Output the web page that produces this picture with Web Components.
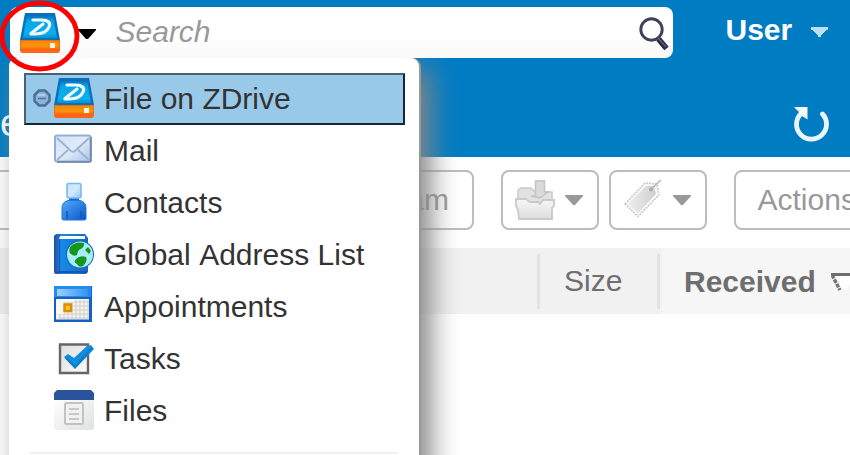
<!DOCTYPE html>
<html lang="en">
<head>
<meta charset="utf-8">
<title>Mail</title>
<style>
html,body{margin:0;padding:0}
body{width:850px;height:455px;overflow:hidden;background:#fff;font:30px/34px "Liberation Sans",Arial,sans-serif;color:#333}
</style>
</head>
<body>
<mail-app></mail-app>
<script>
const define=(name,html)=>{
  const t=document.createElement('template');t.innerHTML=html;
  customElements.define(name,class extends HTMLElement{
    constructor(){super();this.attachShadow({mode:'open'}).append(t.content.cloneNode(true));}
  });
};

const icons={
drive:`<svg width="40" height="40" viewBox="0 0 40 40"><defs><linearGradient id="a" x2="0" y2="1"><stop stop-color="#0869b5"/><stop offset=".25" stop-color="#08a4e6"/><stop offset=".8" stop-color="#0cb0ee"/><stop offset="1" stop-color="#0890d5"/></linearGradient><linearGradient id="b" x2="0" y2="1"><stop stop-color="#e98d00"/><stop offset=".6" stop-color="#fb9210"/><stop offset="1" stop-color="#ff5a12"/></linearGradient></defs><path d="M5 0H35L40 27H0Z" fill="#0870bd"/><path d="M7 2H33L37 25H3Z" fill="url(#a)"/><path d="M0 27H40V37Q40 40 37 40H3Q0 40 0 37Z" fill="#ff6418"/><path d="M1 28H39V37H1Z" fill="url(#b)"/><path d="M13 7H22C28 7 31 10 29 14C27 19 21 21 15 21H11M23 11L11 20.500" fill="none" stroke="#effaff" stroke-width="3.200" stroke-linecap="round" stroke-linejoin="round"/><path d="M30 30h5v5h-5z" fill="#fff8df"/></svg>`,
mail:`<svg width="40" height="40" viewBox="0 0 40 40"><defs><linearGradient id="a" x2="1" y2="1"><stop stop-color="#d0e2f7"/><stop offset=".5" stop-color="#e0ebf9"/><stop offset="1" stop-color="#a9c4e7"/></linearGradient></defs><rect x="1" y="5.500" width="35.500" height="26" rx="2" fill="url(#a)" stroke="#93afd6" stroke-width="2"/><path d="M37 7V31Q37 32 35 32H3" fill="none" stroke="#6781a4" stroke-width="1.500"/><path d="M3 8L17 21Q19 22.500 21 21L35 8M3 30L14 20M35 30L24 20" fill="none" stroke="#98b3d8" stroke-width="1.800"/></svg>`,
person:`<svg width="40" height="40" viewBox="0 0 40 40"><defs><linearGradient id="a" x2="1" y2="1"><stop stop-color="#55aafa"/><stop offset="1" stop-color="#0755c9"/></linearGradient><linearGradient id="b" x2="1" y2="1"><stop stop-color="#c3e3fb"/><stop offset=".5" stop-color="#d4e9f8"/><stop offset="1" stop-color="#8fc3ee"/></linearGradient></defs><path d="M15 16H25V22H15z" fill="#1769ce"/><path d="M8 26Q8 20 14 18.500H26Q32 20 32 26V37Q32 38 30 38H10Q8 38 8 37Z" fill="url(#a)" stroke="#2775d8"/><path d="M13 29V37M27 29V37" stroke="#0f5cc0" stroke-width="1.600"/><rect x="13" y="1.500" width="14" height="14.500" rx="2" fill="url(#b)" stroke="#7bb8ef" stroke-width="1.600"/></svg>`,
book:`<svg width="40" height="40" viewBox="0 0 40 40"><defs><linearGradient id="a" x2="1"><stop stop-color="#174fa7"/><stop offset=".13" stop-color="#2a6fc4"/><stop offset=".15" stop-color="#0d55ad"/><stop offset=".2" stop-color="#178bea"/><stop offset="1" stop-color="#1268c9"/></linearGradient></defs><path d="M2 0H31L34 4V38L32 40H1L0 38V2Z" fill="url(#a)"/><path d="M6 2H31V5H5Z" fill="#f6fbff"/><path d="M1 38H33" stroke="#2552a0" stroke-width="2"/><circle cx="26" cy="20.500" r="14" fill="#1765bd"/><circle cx="26" cy="20.500" r="13" fill="#a8eef9"/><path d="M16 13Q21 7 30 9Q31 12 27 15Q24 15 23 21Q20 23 17 20Q14 18 16 13ZM22 25Q26 21 32 23Q34 27 29 32Q25 34 23 30Q19 28 22 25ZM34 13L37 17L35 20L31 16Z" fill="#14961d"/></svg>`,
calendar:`<svg width="40" height="40" viewBox="0 0 40 40"><defs><linearGradient id="a" x2="1"><stop stop-color="#9bd0ff"/><stop offset="1" stop-color="#3692f2"/></linearGradient></defs><path d="M0 0H38V36H0Z" fill="#1560c7"/><path d="M0 0H37V11H0Z" fill="#238bf1"/><path d="M3 3H34V10H3Z" fill="url(#a)"/><path d="M2 13H35V33.500H2Z" fill="#f5f3ec"/><path d="M4 16H35M4 20H35M4 24H35M4 28H35M4 32H35M6 14V33M10 14V33M14 14V33M18 14V33M22 14V33M26 14V33M30 14V33M34 14V33" stroke="#d0cecb" stroke-width="1"/><path d="M3 13H20V16H10V28H3Z" fill="#fff" opacity=".7"/><path d="M10.500 18.500H17V25H10.500Z" fill="#ffc800" stroke="#dd8c12" stroke-width="2.500"/></svg>`,
task:`<svg width="40" height="40" viewBox="0 0 40 40"><defs><linearGradient id="a" x2="1" y2="1"><stop stop-color="#dedede"/><stop offset="1" stop-color="#fafafa"/></linearGradient></defs><path d="M6 6.500H34V35H6Z" fill="url(#a)" stroke="#666" stroke-width="2.400"/><path d="M10 19L14 16L20 20L33 8L37 7L40 11L21 31Z" fill="#108edb"/><path d="M12 20L21 29L38 10" fill="none" stroke="#087bcc" stroke-width="2"/></svg>`,
files:`<svg width="40" height="40" viewBox="0 0 40 40"><defs><linearGradient id="a" x2="1" y2="1"><stop stop-color="#fff"/><stop offset="1" stop-color="#dfe1e0"/></linearGradient></defs><path d="M0 9H40V37Q40 40 37 40H3Q0 40 0 37Z" fill="url(#a)"/><path d="M0 10V3L3 0H37L40 3V10Z" fill="#29539a"/><rect x="11" y="13" width="18" height="21" rx="1.500" fill="#f1f1f1" stroke="#c1c3c3" stroke-width="2"/><path d="M15 19H25M15 24H25M15 29H25" stroke="#bbb" stroke-width="1.700"/></svg>`,
folder:`<svg width="40" height="40" viewBox="0 0 40 40"><defs><linearGradient id="a" x2="0" y2="1"><stop stop-color="#f7f7f7"/><stop offset="1" stop-color="#ddd"/></linearGradient></defs><path d="M3 22V10L6 8H16L19 11H22V1H29V12H37V23Z" fill="#e2e2e2" stroke="#cacaca" stroke-width="1.500"/><path d="M20.500 1H29.500V12H33L25 18L16 16H20.500Z" fill="#dadada" stroke="#c4c4c4" stroke-width="1.500"/><path d="M1 19H11L15 22H23L25 24L28 20H39V26L37 28V39H4L3 30L1 26Z" fill="url(#a)" stroke="#cacaca" stroke-width="1.800"/></svg>`,
tag:`<svg width="40" height="40" viewBox="0 0 40 40"><defs><linearGradient id="a" x2="1"><stop stop-color="#ededed"/><stop offset="1" stop-color="#d0d0d0"/></linearGradient></defs><path d="M2 24L22 3L34 4L36 15L15 36.500Z" fill="#f7f7f7" stroke="#c8c8c8" stroke-width="1.500" stroke-dasharray="2 1"/><path d="M5 24L23 6H31L33 14L15 33Z" fill="url(#a)"/><circle cx="28" cy="9.500" r="2" fill="#aaa"/><path d="M28 9L38 0" stroke="#b3b3b3" stroke-width="1.500"/></svg>`
};
customElements.define('app-icon',class extends HTMLElement{
  connectedCallback(){if(!this.shadowRoot)this.attachShadow({mode:'open'}).innerHTML='<style>:host,svg{display:block;flex:none}</style>'+icons[this.getAttribute('name')];}
});
define('down-arrow',`<style>:host{display:block;flex:none}svg{display:block}</style><svg width="18" height="10" viewBox="0 0 18 10"><path d="M0 0H18V1L10 10H8L0 1Z" fill="currentColor"/></svg>`);

define('search-bar',`<style>
:host{display:flex;align-items:center;box-sizing:border-box;width:663px;height:51px;border-radius:8px;background:linear-gradient(#fff 55%,#f8f8f8);padding:0 3px 0 10px}
down-arrow{color:#000;margin:3px 0 0 18px}.q{font-style:italic;color:#999;margin-left:19.500px;flex:1;padding-bottom:1px}
app-icon{margin-top:1px}
svg{display:block;margin-top:3px}</style>
<app-icon name="drive"></app-icon><down-arrow></down-arrow><span class="q">Search</span>
<svg width="32" height="36" viewBox="0 0 32 36"><circle cx="13.500" cy="13.500" r="10.700" fill="#fff" stroke="#3c4356" stroke-width="2.900"/><path d="M20.500 23L28.500 32.500" stroke="#272c3a" stroke-width="5.800"/><path d="M20 22L28 31" stroke="#5a6580" stroke-width="1.300"/></svg>`);

define('top-banner',`<style>
:host{display:flex;flex-direction:column;height:157px;background:#007cc3;box-sizing:border-box;padding-top:7px}
.top{display:flex;align-items:center;padding-left:10px;height:51px}
.user{color:#fff;font-weight:bold;margin-left:52.500px;padding-bottom:5px}
.ar{margin:0 0 1px 18.800px;display:block}
.tabs{display:flex;justify-content:space-between;height:99px;align-items:center;padding:30px 21px 0 0;box-sizing:border-box;color:#fff;font-size:38px}
.r{margin-top:2px;display:block}</style>
<div class="top"><search-bar></search-bar><span class="user">User</span><svg class="ar" width="18" height="10" viewBox="0 0 18 10" shape-rendering="crispEdges"><path d="M0 0H17V3H15V4H14V5H13V6H12V7H11V8H10V10H7V8H6V7H5V6H4V5H3V4H2V3H0Z" fill="#bfdef0"/></svg></div>
<div class="tabs"><span>e</span><svg class="r" width="37" height="36" viewBox="0 0 37 36"><path d="M9 7.500A15 15 0 1 0 30.500 8" fill="none" stroke="#eaf5fb" stroke-width="4.800" stroke-linecap="round"/><path d="M2 1H15.500V13.500L10 10L7 6Z" fill="#f2f9fd"/></svg></div>`);

define('tool-button',`<style>:host{display:flex;align-items:center;box-sizing:border-box;height:60px;border:2px solid #bdbdbd;border-radius:8px;color:#999;flex:none;padding:0 21.500px}
:host([kind=icon]){padding:0 12px;justify-content:space-between;width:98px}</style><slot></slot>`);
define('tool-bar',`<style>:host{display:flex;height:91px;box-sizing:border-box;padding-top:13px;background:#fff;overflow:hidden}
.s{width:494px;margin-left:-20px;justify-content:flex-end;margin-right:27px;padding-right:23px}.f{margin-right:10px}.t{margin-right:27px}.a{width:160px}
down-arrow{margin-right:2px}</style>
<tool-button class="s">Spam</tool-button>
<tool-button kind="icon" class="f"><app-icon name="folder"></app-icon><down-arrow></down-arrow></tool-button>
<tool-button kind="icon" class="t"><app-icon name="tag"></app-icon><down-arrow></down-arrow></tool-button>
<tool-button class="a">Actions</tool-button>`);
define('list-header',`<style>:host{display:flex;height:66px;background:#f1f1f1;color:#6e6e6e;align-items:center;overflow:hidden}
.sp{width:537px;flex:none}.l{width:3px;height:55px;background:#e3e3e3;flex:none}.size{width:117px;box-sizing:border-box;flex:none;padding-left:24px}.rec{display:flex;align-items:center;flex:1;min-width:0;height:66px;background:#f6f6f6;font-weight:bold;padding-left:22px;margin-left:2px;padding-top:2px;box-sizing:border-box}
svg{display:block;flex:none;margin:0 0 0 15px}</style>
<div class="sp"></div><div class="l"></div><span class="size">Size</span><div class="l"></div><div class="rec"><span>Received</span><svg width="30" height="18" viewBox="0 0 30 18"><path d="M1 2L10 16H16L25 2" fill="#fff"/><path d="M1 2L9 17" fill="none" stroke="#777" stroke-width="3.500" stroke-dasharray="4 1"/><path d="M0 1.500H30" stroke="#6e6e6e" stroke-width="3"/></svg></div>`);

define('menu-item',`<style>:host{display:flex;align-items:center;box-sizing:border-box;height:52px;padding-left:30px}
:host([selected]){background:#99c9e8;border:2px solid;border-color:#476270 #152733 #152733 #476270;padding-left:7px}
.dot{display:none;margin:-2px 3px 0 0}:host([selected]) .dot{display:block}
slot[name=icon]{display:block;margin-top:-2px}
.label{margin-left:10px;color:#333;white-space:nowrap}</style>
<svg class="dot" width="18" height="18" viewBox="0 0 18 18"><path d="M6 1.500H12L16.500 6V12L12 16.500H6L1.500 12V6Z" fill="#8db3d6" stroke="#4b7199" stroke-width="2.500"/><path d="M5 9.500H13" stroke="#4c75a0" stroke-width="1.500"/><path d="M5 6H12" stroke="#bdd4e7" stroke-width="1.500"/></svg><slot name="icon"></slot><span class="label"><slot></slot></span>`);
define('search-menu',`<style>:host{position:absolute;left:9px;top:58px;width:412px;height:440px;box-sizing:border-box;background:#fff;border-right:2px solid #999;border-radius:0 9px 0 0;border-top-left-radius:8px;padding:15px 14px 0 15px;box-shadow:10px 10px 28px #858585}
hr{border:0;height:2px;background:#f0f0f0;margin:15px 7px 0 6px}</style>
<menu-item selected><app-icon slot="icon" name="drive"></app-icon>File on ZDrive</menu-item>
<menu-item><app-icon slot="icon" name="mail"></app-icon>Mail</menu-item>
<menu-item><app-icon slot="icon" name="person"></app-icon>Contacts</menu-item>
<menu-item><app-icon slot="icon" name="book"></app-icon>Global <span style="margin-left:.1px">Address List</span></menu-item>
<menu-item><app-icon slot="icon" name="calendar"></app-icon>Appointments</menu-item>
<menu-item><app-icon slot="icon" name="task"></app-icon>Tasks</menu-item>
<menu-item><app-icon slot="icon" name="files"></app-icon>Files</menu-item><hr>`);
define('ring-marker',`<style>:host{position:absolute;left:0;top:0;pointer-events:none}svg{display:block}</style><svg width="82" height="74" viewBox="0 0 82 74"><ellipse cx="39.500" cy="36" rx="37.500" ry="33" fill="none" stroke="#f00" stroke-width="4.800"/></svg>`);
define('mail-app',`<style>:host{display:block;position:relative;width:850px;height:455px;overflow:hidden}.clip{position:absolute;left:0;top:58px;width:850px;height:397px;overflow:hidden}search-menu{top:0}</style>
<top-banner></top-banner><tool-bar></tool-bar><list-header></list-header><div class="clip"><search-menu></search-menu></div><ring-marker></ring-marker>`);
</script>
</body>
</html>
